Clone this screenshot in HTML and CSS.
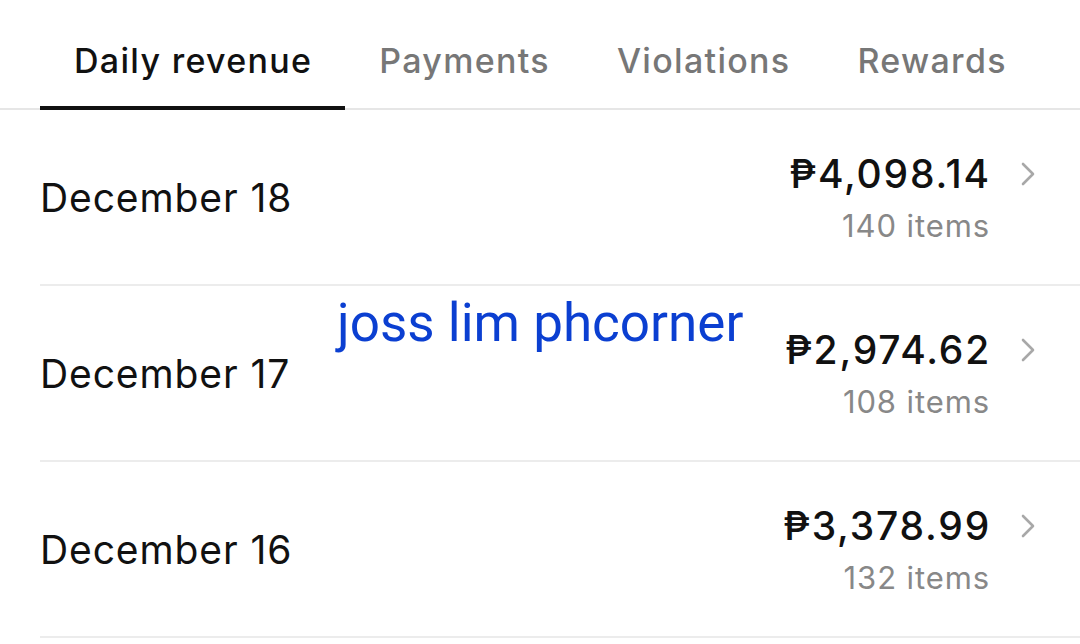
FILE: index.html
```html
<!DOCTYPE html>
<html>
<head>
<meta charset="utf-8">
<link rel="stylesheet" href="styles.css">
</head>
<body>
<div class="page">
  <nav class="tabs">
    <div class="tab active">Daily revenue</div>
    <div class="tab">Payments</div>
    <div class="tab">Violations</div>
    <div class="tab">Rewards</div>
  </nav>
  <ul class="list">
    <li class="row">
      <span class="date">December 18</span>
      <div class="right">
        <div class="sums">
          <span class="amount">₱4,098.14</span>
          <span class="items">140 items</span>
        </div>
        <svg class="chev" viewBox="0 0 20 28" width="20" height="28"><path d="M5 4 L15 14 L5 24" fill="none" stroke="#a8a8a8" stroke-width="2.6" stroke-linecap="round" stroke-linejoin="round"/></svg>
      </div>
    </li>
    <li class="row">
      <span class="date">December 17</span>
      <div class="right">
        <div class="sums">
          <span class="amount">₱2,974.62</span>
          <span class="items">108 items</span>
        </div>
        <svg class="chev" viewBox="0 0 20 28" width="20" height="28"><path d="M5 4 L15 14 L5 24" fill="none" stroke="#a8a8a8" stroke-width="2.6" stroke-linecap="round" stroke-linejoin="round"/></svg>
      </div>
      <span class="watermark">joss lim phcorner</span>
    </li>
    <li class="row">
      <span class="date">December 16</span>
      <div class="right">
        <div class="sums">
          <span class="amount">₱3,378.99</span>
          <span class="items">132 items</span>
        </div>
        <svg class="chev" viewBox="0 0 20 28" width="20" height="28"><path d="M5 4 L15 14 L5 24" fill="none" stroke="#a8a8a8" stroke-width="2.6" stroke-linecap="round" stroke-linejoin="round"/></svg>
      </div>
    </li>
  </ul>
</div>
</body>
</html>
```

FILE: styles.css
```css
* { box-sizing: border-box; }
html, body { margin: 0; padding: 0; background: #fff; }
body {
  width: 1080px;
  height: 644px;
  overflow: hidden;
  font-family: Inter, "Noto Sans", sans-serif;
  color: #111;
}
.tabs {
  display: flex;
  padding-left: 40px;
  height: 110px;
  border-bottom: 2px solid #e6e6e6;
}
.tab {
  padding: 0 33px 0 34px;
  font-size: 34px;
  letter-spacing: 1.3px;
  font-weight: 500;
  color: #777;
  display: flex;
  align-items: center;
  padding-top: 14px;
  margin-bottom: -2px;
  border-bottom: 4px solid transparent;
}
.tab.active {
  color: #111;
  border-bottom-color: #111;
}
.list {
  list-style: none;
  margin: 0;
  padding: 0 0 0 40px;
}
.row {
  position: relative;
  display: flex;
  align-items: center;
  justify-content: space-between;
  height: 176px;
  border-bottom: 2px solid #ececec;
}
.date {
  font-size: 39px;
  letter-spacing: 0.9px;
  color: #111;
}
.right {
  display: flex;
  align-items: flex-start;
  gap: 28px;
  padding-right: 42px;
}
.sums {
  display: flex;
  flex-direction: column;
  align-items: flex-end;
  padding-top: 6px;
}
.amount {
  font-size: 39px;
  letter-spacing: 1.8px;
  font-weight: 500;
  color: #111;
  line-height: 48px;
  margin-right: -1px;
}
.items {
  font-size: 31px;
  letter-spacing: 0.9px;
  color: #888;
  line-height: 48px;
  margin-top: 4px;
}
.chev {
  margin-top: 16px;
}
.watermark {
  position: absolute;
  left: 297px;
  top: 6px;
  font-family: Roboto, sans-serif;
  font-size: 53px;
  color: #0b3fd1;
}
```
